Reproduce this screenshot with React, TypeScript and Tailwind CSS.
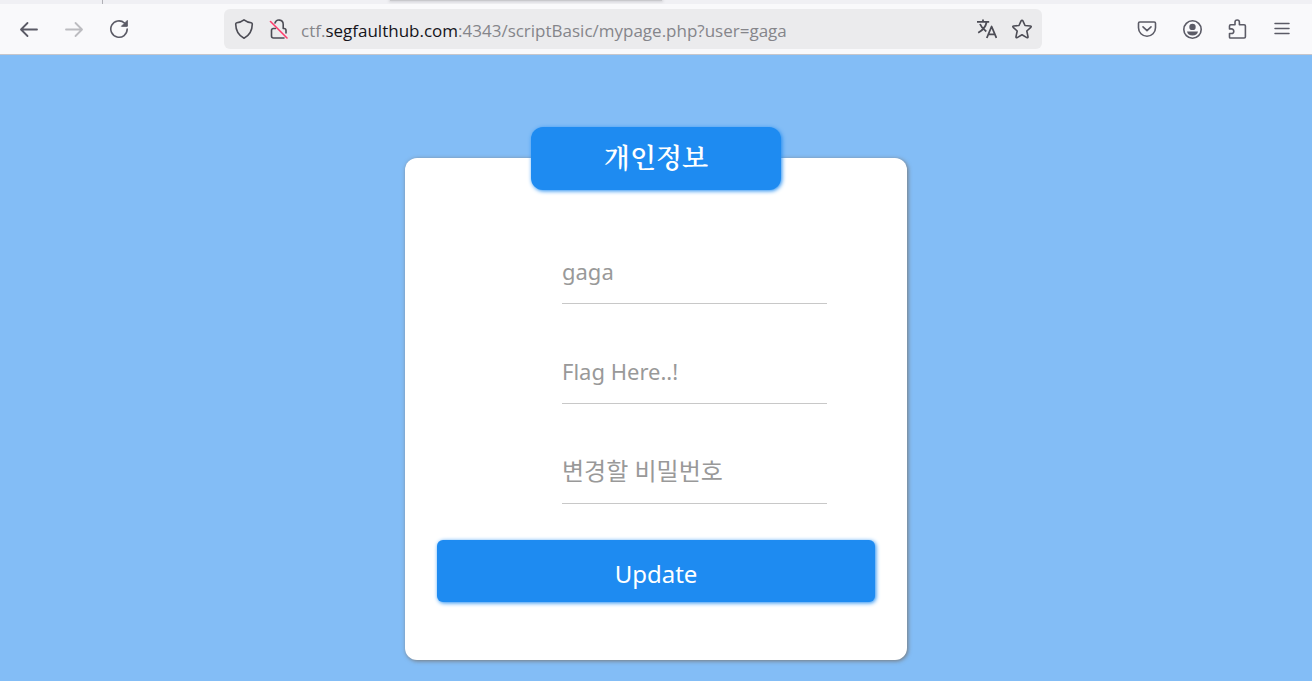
import type { ReactNode } from "react";

function Icon({ children }: { children: ReactNode }) {
  return (
    <svg
      viewBox="0 0 20 20"
      className="size-5"
      fill="none"
      stroke="currentColor"
      strokeWidth="1.6"
      strokeLinecap="round"
      strokeLinejoin="round"
      aria-hidden="true"
    >
      {children}
    </svg>
  );
}

function ToolButton({ label, children, disabled }: { label: string; children: ReactNode; disabled?: boolean }) {
  return (
    <button type="button" aria-label={label} disabled={disabled} className="shrink-0 disabled:text-[#bcbcc0]">
      <Icon>{children}</Icon>
    </button>
  );
}

function BrowserToolbar() {
  return (
    <header className="border-b border-[#c6c6cb] bg-[#f9f9fb] text-[#5b5b66]">
      <div className="flex h-1 bg-[#f0f0f4]">
        <div className="w-[103px] border-r border-[#b0b0b6]" />
        <div className="ml-[287px] h-px w-[272px] bg-[#c8c8cc] shadow-[0_0_3px_1px_#d0d0d4] [clip-path:inset(0_-4px_-3px_-4px)]" />
      </div>
      <div className="flex h-[50px] items-center">
        <nav className="flex w-[224px] shrink-0 gap-[25px] pl-[19px]">
          <ToolButton label="Back">
            <path d="M18 10.500H2.500M8.500 4L2 10.500l6.500 6.500" strokeWidth="1.800" />
          </ToolButton>
          <ToolButton label="Forward" disabled>
            <path d="M2 10.500h15.500M11.500 4l6.500 6.500-6.500 6.500" strokeWidth="1.800" />
          </ToolButton>
          <ToolButton label="Reload">
            <path d="M18.200 10A8.200 8.200 0 1 1 15.500 4" />
            <path d="M18.300 1.800v5.500h-5.500z" fill="currentColor" strokeWidth="1" />
          </ToolButton>
        </nav>
        <div className="flex h-10 w-[818px] shrink items-center rounded-md bg-[#ebebed] px-[10px]">
          <div className="flex gap-[15px] text-[#4c4c55]">
            <ToolButton label="Tracking protection">
              <path d="M10 .900c2.400 1.900 4.800 2.600 7.200 2.900q1.100.200 1.100 1.300c-.100 7-2.500 11.300-8.300 14.100C4.200 16.400 1.800 12.100 1.700 5.100q0-1.100 1.100-1.300C5.200 3.500 7.600 2.800 10 .900z" />
            </ToolButton>
            <ToolButton label="Connection not secure">
              <path d="M6 4A4.200 4.200 0 0 1 14.200 5.200v4.300H15q2 0 2 2v2.500M6.500 9.500H4.500Q2.500 9.500 2.500 11.500v5.500Q2.500 19 4.500 19h10.500" />
              <path d="M1.500 2.500L18 19" stroke="#ff3b6b" />
            </ToolButton>
          </div>
          <p className="ml-3 mt-1 min-w-0 flex-1 truncate font-['Open_Sans',sans-serif] text-[17px] leading-6 text-[#85858a]">
            ctf.<span className="text-[#15141a]">segfaulthub.com</span>:4343/scriptBasic/mypage.php?user=gaga
          </p>
          <div className="flex gap-[15px] text-[#4c4c55]">
            <ToolButton label="Translate page">
              <path d="M0 2.800h12.200M6 .500v2.300M9.600 3C8.800 7.500 5.300 11.500 1.200 13.700M3 5c1.300 3.400 3.500 5.500 6.300 7.500M9.800 19L14.600 7.500 19.400 19M11.400 15.400h6.400" strokeWidth="1.800" strokeLinecap="butt" />
            </ToolButton>
            <ToolButton label="Bookmark page">
              <path d="M10 1.200Q10.600 1.200 10.900 1.800L13 6.500l5.300.500q1.500.200.500 1.300l-4 3.700 1.200 5.700q.200 1.500-1.200.900L10 15.800l-4.800 2.800q-1.400.600-1.200-.900L5.200 12l-4-3.700Q.200 7.200 1.700 7L7 6.500 9.100 1.800Q9.400 1.200 10 1.200z" />
            </ToolButton>
          </div>
        </div>
        <nav className="ml-auto flex gap-[25px] pr-5">
          <ToolButton label="Save to Pocket">
            <path d="M2.800 3h14.400q1.300 0 1.300 1.300v4.500a8.500 8.500 0 0 1-17 0V4.300Q1.500 3 2.800 3z" />
            <path d="M6 7.800l4 3.800 4-3.800" />
          </ToolButton>
          <ToolButton label="Account">
            <circle cx="10.500" cy="10.500" r="8.700" />
            <circle cx="10.500" cy="7.900" r="3.200" fill="currentColor" stroke="none" />
            <path d="M5 12.500h11q-.800 4-5.500 4t-5.500-4z" fill="currentColor" stroke="none" />
          </ToolButton>
          <ToolButton label="Extensions">
            <path d="M3.300 19q-.800 0-.800-.800V14.500h2a2.300 2.300 0 0 0 0-4.600h-2V7q0-1.200 1.200-1.200h4.300V3.200a2.200 2.200 0 0 1 4.400 0v2.600h4.800q1.200 0 1.200 1.200v10.800q0 1.200-1.200 1.200z" />
          </ToolButton>
          <ToolButton label="Open menu">
            <path d="M3 4.500h14M3 9.500h14M3 14.500h14" strokeWidth="1.500" />
          </ToolButton>
        </nav>
      </div>
    </header>
  );
}

type FieldProps = { type: string; name: string; placeholder: string; textSize: string };

function Field({ type, name, placeholder, textSize }: FieldProps) {
  return (
    <input
      type={type}
      name={name}
      aria-label={placeholder}
      placeholder={placeholder}
      className={`h-16 w-full border-b border-[#c8c8c8] bg-transparent pb-0.5 font-['Noto_Sans','Noto_Sans_CJK_KR',sans-serif] outline-none placeholder:text-[#999999] ${textSize}`}
    />
  );
}

export default function App() {
  return (
    <div className="flex min-h-screen flex-col bg-[#83bdf6]">
      <BrowserToolbar />
      <main className="flex flex-1 justify-center px-4 pt-[72px] pb-[21px]">
        <div className="flex w-full max-w-[502px] flex-col items-center">
          <h1 className="z-10 -mb-8 flex h-[63px] w-[250px] items-center justify-center rounded-xl bg-[#1e8bf1] pb-1 font-['Noto_Serif_CJK_KR','Noto_Sans_CJK_KR',serif] text-[27px] leading-8 font-semibold text-white shadow-[1px_1px_4px_#1e8bf1]">
            개인정보
          </h1>
          <form
            onSubmit={(event) => event.preventDefault()}
            className="w-full rounded-xl bg-white px-8 pt-[82px] pb-[58px] shadow-[1px_1px_4px_#777777]"
          >
            <div className="mr-[48px] ml-[125px] flex flex-col gap-9">
              <Field type="text" name="id" placeholder="gaga" textSize="text-[22px]" />
              <Field type="text" name="info" placeholder="Flag Here..!" textSize="text-[22px]" />
              <Field type="password" name="pw" placeholder="변경할 비밀번호" textSize="text-2xl" />
            </div>
            <button
              type="submit"
              className="mt-9 h-[62px] w-full rounded-md bg-[#1e8bf1] pt-1.5 font-['Noto_Sans',sans-serif] text-2xl text-white shadow-[1px_1px_4px_#1e8bf1]"
            >
              Update
            </button>
          </form>
        </div>
      </main>
    </div>
  );
}
